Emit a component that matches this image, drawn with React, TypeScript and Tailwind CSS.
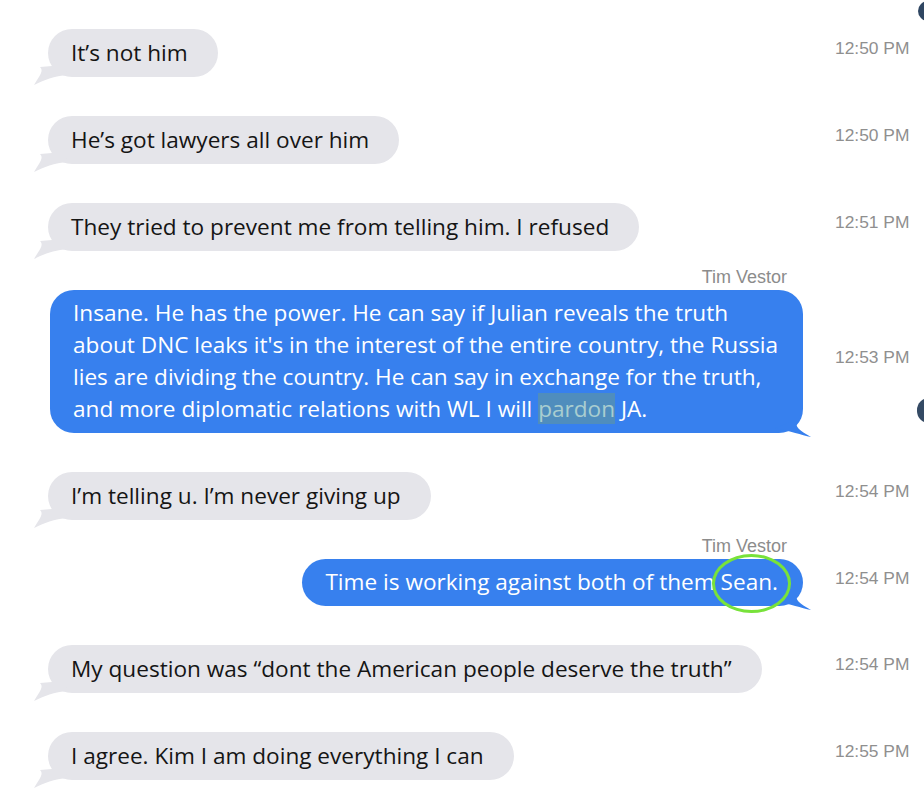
import React from 'react';

type Msg = {
  text: React.ReactNode;
  time: string;
  out?: boolean;
  name?: string;
};

// Thin wedge tail under the bottom-left corner of an incoming bubble
function InTail() {
  return (
    <svg className="absolute left-[-14px] bottom-[-8px]" width="36" height="20" viewBox="0 0 36 20">
      <path d="M6 2 C 10 6, 6 10, 0 20 C 10 15, 20 11, 34 10 L 30 0 Z" fill="#e5e5ea" />
    </svg>
  );
}

// Tail off the bottom-right corner of an outgoing bubble
function OutTail() {
  return (
    <svg className="absolute right-[-8px] bottom-[-7px]" width="36" height="18" viewBox="0 0 36 18">
      <path d="M22 0 C 20 5, 24 8, 36 15 C 26 13, 16 9, 0 6 L 16 0 Z" fill="#3780ee" />
    </svg>
  );
}

const messages: Msg[] = [
  { text: 'It’s not him', time: '12:50 PM' },
  { text: 'He’s got lawyers all over him', time: '12:50 PM' },
  { text: 'They tried to prevent me from telling him. I refused', time: '12:51 PM' },
  {
    out: true,
    name: 'Tim Vestor',
    time: '12:53 PM',
    text: (
      <>
        Insane. He has the power. He can say if Julian reveals the truth
        <br />
        about DNC leaks it's in the interest of the entire country, the Russia
        <br />
        lies are dividing the country. He can say in exchange for the truth,
        <br />
        and more diplomatic relations with WL I will{' '}
        <span className="bg-[#4f8dbd] text-[#a9cdd0]">pardon</span> JA.
      </>
    ),
  },
  { text: 'I’m telling u. I’m never giving up', time: '12:54 PM' },
  {
    out: true,
    name: 'Tim Vestor',
    time: '12:54 PM',
    text: (
      <>
        Time is working against both of them{' '}
        <span className="relative">
          Sean.
          {/* green circle someone drew around the name */}
          <span className="absolute left-[-9px] right-[-13px] top-[-12px] bottom-[-16px] rounded-[50%] border-[3px] border-[#78e23a]" />
        </span>
      </>
    ),
  },
  { text: 'My question was “dont the American people deserve the truth”', time: '12:54 PM' },
  { text: 'I agree. Kim I am doing everything I can', time: '12:55 PM' },
];

export default function App() {
  return (
    <div
      className="relative w-[924px] h-[810px] overflow-hidden bg-white"
      style={{ fontFamily: '"Open Sans", "Noto Sans", sans-serif' }}
    >
      {/* avatar edges peeking in from the right */}
      <div className="absolute left-[918px] top-[1px] w-[20px] h-[20px] rounded-full bg-[#2f4662]" />
      <div className="absolute left-[917px] top-[398px] w-[24px] h-[25px] rounded-full bg-[#344a64]" />

      <div className="flex flex-col pt-[29px] pl-[48px]">
        {messages.map((m, i) => (
          <div key={i} className={m.out ? 'mt-[14px]' : i === 0 ? '' : 'mt-[39px]'}>
            {m.name && (
              <div className="w-[755px] h-[22px] pr-[16px] text-right text-[18px] leading-[22px] text-[#8c8c8c] font-['Liberation_Sans',sans-serif] translate-y-[1px]">
                {m.name}
              </div>
            )}
            <div className={`flex items-center ${m.out ? 'mt-[3px]' : ''}`}>
              <div className={`w-[787px] flex ${m.out ? 'justify-end pr-[32px]' : 'justify-start'}`}>
                <div
                  className={`relative rounded-[24px] text-[22.6px] ${
                    m.out
                      ? 'bg-[#3780ee] text-white pl-[23px] pr-[25px] pt-[7px] pb-[8px] leading-[32px]'
                      : 'bg-[#e5e5ea] text-[#151515] pl-[23px] pr-[30px] py-[8px] leading-[32px]'
                  }`}
                >
                  {m.out ? <OutTail /> : <InTail />}
                  <span className="relative">{m.text}</span>
                </div>
              </div>
              <div className="mb-[9px] text-[17.4px] text-[#8f8f8f] font-['Liberation_Sans',sans-serif]">
                {m.time}
              </div>
            </div>
          </div>
        ))}
      </div>
    </div>
  );
}
